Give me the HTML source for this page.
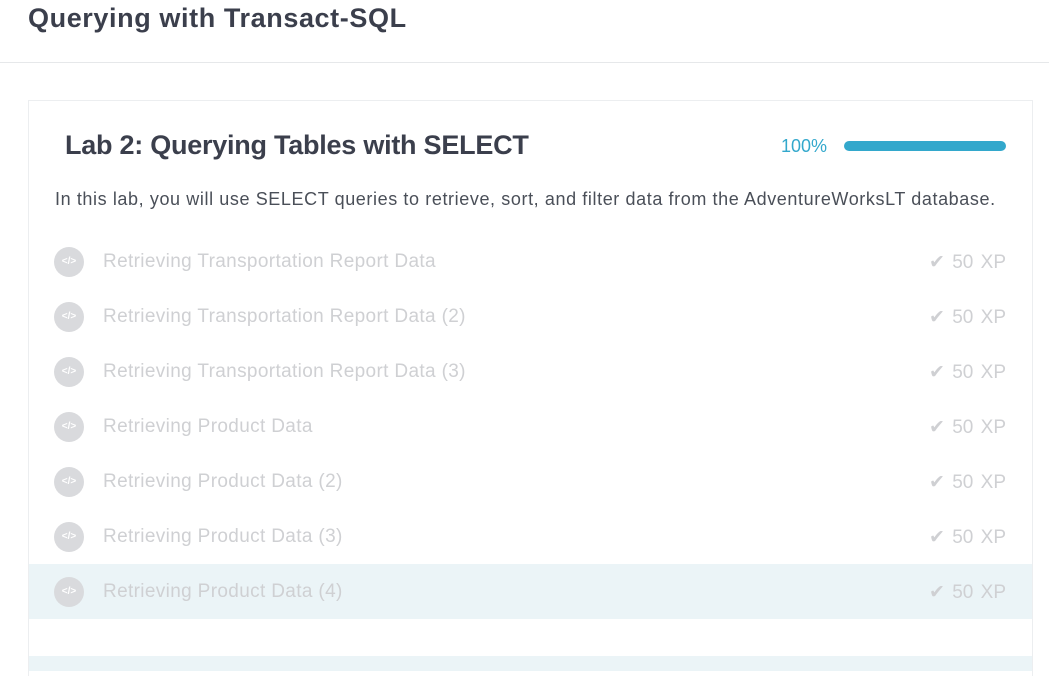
<!DOCTYPE html>
<html><head><style>
html,body{margin:0;padding:0;width:1049px;height:683px;overflow:hidden;background:#fff;font-family:"Liberation Sans",sans-serif;}
.h1{position:absolute;left:28px;top:3px;font-size:27px;font-weight:bold;color:#3b3f4c;letter-spacing:0.6px;}
.div{position:absolute;left:0;top:62px;width:1049px;height:1px;background:#e6e8ea;}
.card{position:absolute;left:28px;top:100px;width:1003px;height:575px;border:1px solid #eceef0;border-bottom:none;background:#fff;}
.lab{position:absolute;left:36px;top:29px;font-size:27px;font-weight:bold;color:#3b3f4c;letter-spacing:-0.25px;}
.pct{position:absolute;left:752px;top:35px;font-size:18px;color:#33a8cc;}
.bar{position:absolute;left:815px;top:40px;width:162px;height:10px;border-radius:5px;background:#33a8cc;}
.desc{position:absolute;left:26px;top:88px;font-size:18px;color:#4a4f58;letter-spacing:0.6px;white-space:nowrap;}
.row{position:absolute;left:0;width:1003px;height:55px;}
.row.hl{background:#ebf4f7;}
.ic{position:absolute;left:25px;top:13px;width:30px;height:30px;border-radius:50%;background:#d9dadd;color:#fff;font-size:10px;line-height:30px;text-align:center;font-weight:bold;}
.t{position:absolute;left:74px;top:17px;font-size:19px;color:#cfd0d3;letter-spacing:0.35px;}
.xp{position:absolute;right:26px;top:17px;font-size:19px;color:#cfd0d3;letter-spacing:0px;word-spacing:2px;}
.strip{position:absolute;left:0;top:555px;width:1003px;height:15px;background:#ebf4f7;}
</style></head><body>
<div class="h1">Querying with Transact-SQL</div>
<div class="div"></div>
<div class="card">
<div class="lab">Lab 2: Querying Tables with SELECT</div>
<div class="pct">100%</div>
<div class="bar"></div>
<div class="desc">In this lab, you will use SELECT queries to retrieve, sort, and filter data from the AdventureWorksLT database.</div>
<div class="row" style="top:133px"><div class="ic">&lt;/&gt;</div><div class="t">Retrieving Transportation Report Data</div><div class="xp">✔ 50 XP</div></div>
<div class="row" style="top:188px"><div class="ic">&lt;/&gt;</div><div class="t">Retrieving Transportation Report Data (2)</div><div class="xp">✔ 50 XP</div></div>
<div class="row" style="top:243px"><div class="ic">&lt;/&gt;</div><div class="t">Retrieving Transportation Report Data (3)</div><div class="xp">✔ 50 XP</div></div>
<div class="row" style="top:298px"><div class="ic">&lt;/&gt;</div><div class="t">Retrieving Product Data</div><div class="xp">✔ 50 XP</div></div>
<div class="row" style="top:353px"><div class="ic">&lt;/&gt;</div><div class="t">Retrieving Product Data (2)</div><div class="xp">✔ 50 XP</div></div>
<div class="row" style="top:408px"><div class="ic">&lt;/&gt;</div><div class="t">Retrieving Product Data (3)</div><div class="xp">✔ 50 XP</div></div>
<div class="row hl" style="top:463px"><div class="ic">&lt;/&gt;</div><div class="t">Retrieving Product Data (4)</div><div class="xp">✔ 50 XP</div></div>
<div class="strip"></div>
</div>
</body></html>
